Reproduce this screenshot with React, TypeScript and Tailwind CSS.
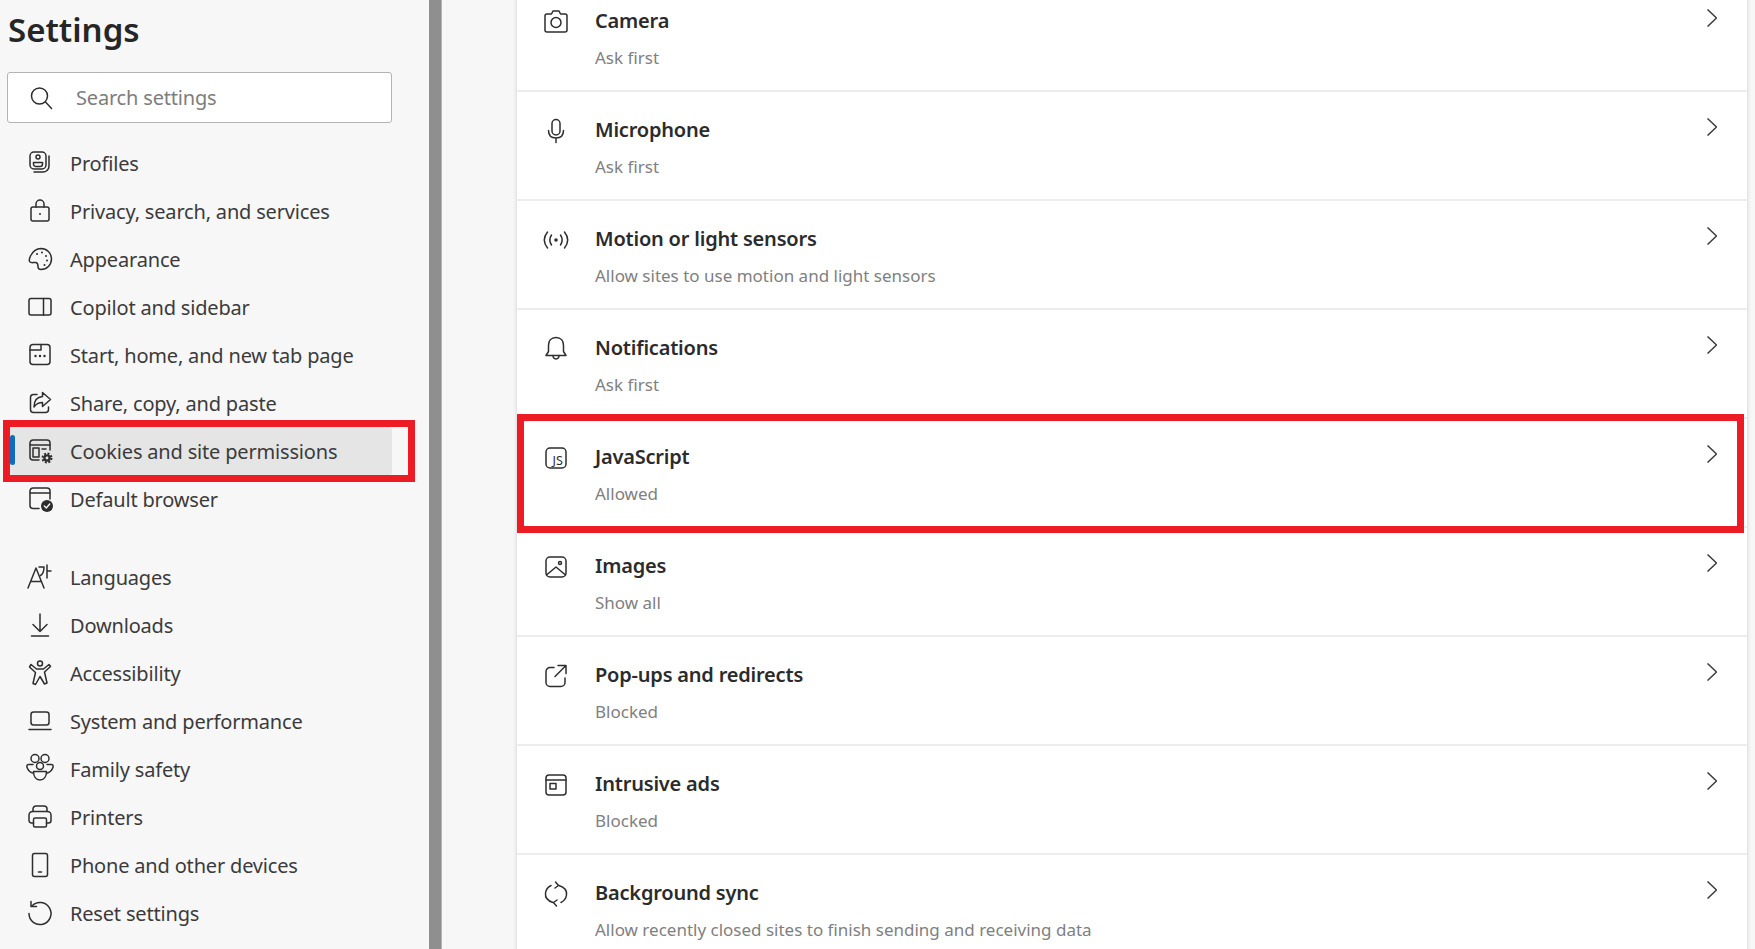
import type { ReactNode } from "react";

const Svg = ({ children, className = "w-6 h-6" }: { children: ReactNode; className?: string }) => (
  <svg
    viewBox="0 0 24 24"
    fill="none"
    stroke="#2e2e2e"
    strokeWidth="1.5"
    strokeLinecap="round"
    strokeLinejoin="round"
    className={`${className} shrink-0 overflow-visible`}
  >
    {children}
  </svg>
);

const sidebarTop = [
  {
    label: "Profiles",
    icon: (
      <>
        <rect x="2" y="1" width="16" height="17" rx="4" />
        <circle cx="10" cy="6" r="2" />
        <path d="M5.500 11.500h9v1.500a2.500 2.500 0 0 1-2.500 2.500H8A2.500 2.500 0 0 1 5.500 13z" />
        <path d="M21 5v10a6 6 0 0 1-6 6H6" />
      </>
    ),
  },
  {
    label: "Privacy, search, and services",
    icon: (
      <>
        <rect x="3" y="8" width="18" height="14" rx="2" />
        <path d="M8 8V5a4 4 0 0 1 8 0v3" />
        <circle cx="12" cy="15" r="1" fill="#2e2e2e" stroke="none" />
      </>
    ),
  },
  {
    label: "Appearance",
    icon: (
      <>
        <path d="M13 1.500a10.500 10.500 0 0 1 0 21c-2 0-3-1.200-3-3 0-2 0-3.500-2-4-2.500-.5-4 1-6-.5-1.500-1.500-.5-4 .5-6 2-4 6-7.500 10.500-7.500z" />
        <g fill="#2e2e2e" stroke="none">
          <circle cx="9" cy="7" r="1" />
          <circle cx="14" cy="5.500" r="1" />
          <circle cx="18" cy="9" r="1" />
          <circle cx="19" cy="13.500" r="1" />
          <circle cx="16.500" cy="18" r="1" />
        </g>
      </>
    ),
  },
  {
    label: "Copilot and sidebar",
    icon: (
      <>
        <rect x="1" y="3.500" width="22" height="16.500" rx="2" />
        <path d="M15.500 3.500V20" />
      </>
    ),
  },
  {
    label: "Start, home, and new tab page",
    icon: (
      <>
        <rect x="2" y="1.500" width="20" height="20" rx="3" />
        <path d="M2 7h11V1.500" />
        <path d="M7.500 13h.01M12 13h.01M16.500 13h.01" strokeWidth="2.400" />
      </>
    ),
  },
  {
    label: "Share, copy, and paste",
    icon: (
      <>
        <path d="M9 3.500H5.500a3 3 0 0 0-3 3v12a3 3 0 0 0 3 3h12a3 3 0 0 0 3-3V16" />
        <path d="M14.500 1.500l8 7-8 7v-4c-4.500 0-6.500 1.500-8.500 4.500 0-6 3-10 8.500-10.500z" />
      </>
    ),
  },
  {
    label: "Cookies and site permissions",
    icon: (
      <>
        <path d="M11 21H5a3 3 0 0 1-3-3V4a3 3 0 0 1 3-3h14a3 3 0 0 1 3 3v7" />
        <path d="M2 6h20" />
        <rect x="5" y="9" width="6" height="9" />
        <path d="M14 10h4" />
        <circle cx="19" cy="19" r="2.600" strokeWidth="2.400" />
        <circle cx="19" cy="19" r="4.500" strokeWidth="2" strokeDasharray="2 1.530" strokeLinecap="butt" />
      </>
    ),
  },
  {
    label: "Default browser",
    icon: (
      <>
        <path d="M11 21.500H5a3 3 0 0 1-3-3V4a3 3 0 0 1 3-3h14a3 3 0 0 1 3 3v8" />
        <path d="M2 6h20" />
        <circle cx="19" cy="19" r="6" fill="#2e2e2e" stroke="none" />
        <path d="M16.300 19l2 2 3.400-4" stroke="#f7f7f7" strokeWidth="1.400" />
      </>
    ),
  },
];

const sidebarBottom = [
  {
    label: "Languages",
    icon: (
      <>
        <path d="M0 23L8 3l8 20M3 16.500h10" />
        <path d="M11 2h5c0 4-1 7-3.500 8.500M19 0v13M19 6h4" />
      </>
    ),
  },
  {
    label: "Downloads",
    icon: (
      <>
        <path d="M12 1v17M5 11.500l7 7 7-7" />
        <path d="M3.500 23h17" />
      </>
    ),
  },
  {
    label: "Accessibility",
    icon: (
      <>
        <circle cx="12" cy="2.500" r="2.500" />
        <path d="M3 3.500l5.500 4.500h7L21 3.500l1.500 2-6 5.500 2.500 11-2.500 1L12 15.500 7.500 23.500 5 22.500l2.500-11-6-5.500z" />
      </>
    ),
  },
  {
    label: "System and performance",
    icon: (
      <>
        <rect x="3" y="3" width="18" height="13" rx="2.500" />
        <path d="M1 20.500h22" />
      </>
    ),
  },
  {
    label: "Family safety",
    icon: (
      <>
        <circle cx="7" cy="1.500" r="4" />
        <circle cx="17" cy="1.500" r="4" />
        <circle cx="12" cy="9" r="3.500" />
        <path d="M5.500 14.500h13c0 5-2.500 8.500-6.500 8.500s-6.500-3.500-6.500-8.500z" />
        <path d="M5 7.500H.5c-2 0-2 2-1 4 1 2 2.500 4 5 4.500M19 7.500h4.500c2 0 2 2 1 4-1 2-2.500 4-5 4.500" />
      </>
    ),
  },
  {
    label: "Printers",
    icon: (
      <>
        <path d="M5 6.500V4a3 3 0 0 1 3-3h8a3 3 0 0 1 3 3v2.500" />
        <path d="M5.500 18H3.500A2.500 2.500 0 0 1 1 15.500V10a3.500 3.500 0 0 1 3.500-3.500h15A3.500 3.500 0 0 1 23 10v5.500a2.500 2.500 0 0 1-2.500 2.500h-2" />
        <rect x="5.500" y="13" width="13" height="9" rx="1.500" />
      </>
    ),
  },
  {
    label: "Phone and other devices",
    icon: (
      <>
        <rect x="4.500" y="0.500" width="15" height="23" rx="2" />
        <path d="M10.500 19h3" />
      </>
    ),
  },
  {
    label: "Reset settings",
    icon: (
      <>
        <path d="M4 5a11 11 0 1 1-3 7.500" />
        <path d="M3 0.500V5.500h5.500" />
      </>
    ),
  },
];

const rows = [
  {
    title: "Camera",
    sub: "Ask first",
    icon: (
      <>
        <path d="M7.500 4l1.500-3h6l1.500 3H21a2 2 0 0 1 2 2v14a2 2 0 0 1-2 2H3a2 2 0 0 1-2-2V6a2 2 0 0 1 2-2z" />
        <circle cx="12" cy="12.500" r="5" />
      </>
    ),
  },
  {
    title: "Microphone",
    sub: "Ask first",
    icon: (
      <>
        <rect x="8" y="0.500" width="8" height="15.500" rx="4" />
        <path d="M4.500 11.500c0 5 3 7.500 7.500 7.500s7.500-2.500 7.500-7.500M12 19v4.500" />
      </>
    ),
  },
  {
    title: "Motion or light sensors",
    sub: "Allow sites to use motion and light sensors",
    icon: (
      <>
        <circle cx="12" cy="12" r="1.800" fill="#2e2e2e" stroke="none" />
        <path d="M3.500 4C-.5 9-.5 15 3.500 20M7.500 7C5.500 10 5.500 14 7.500 17M20.500 4C24.500 9 24.500 15 20.500 20M16.500 7C18.500 10 18.500 14 16.500 17" />
      </>
    ),
  },
  {
    title: "Notifications",
    sub: "Ask first",
    icon: (
      <>
        <path d="M12 .5c-5 0-7.500 3.500-7.500 8v6L2 18.500h20l-2.500-4v-6c0-4.500-2.500-8-7.500-8z" />
        <path d="M9 18.500c0 4.500 6 4.500 6 0" />
      </>
    ),
  },
  {
    title: "JavaScript",
    sub: "Allowed",
    marked: true,
    icon: (
      <>
        <rect x="2" y="2" width="20" height="20" rx="4" />
        <text
          x="8.500"
          y="19"
          fontFamily="'Noto Sans', sans-serif"
          fontSize="12.500"
          fill="#2e2e2e"
          stroke="none"
        >
          JS
        </text>
      </>
    ),
  },
  {
    title: "Images",
    sub: "Show all",
    icon: (
      <>
        <rect x="2" y="2" width="20" height="20" rx="4" />
        <circle cx="16" cy="8" r="1.500" />
        <path d="M2.500 20l9.500-8 9.500 8" />
      </>
    ),
  },
  {
    title: "Pop-ups and redirects",
    sub: "Blocked",
    icon: (
      <>
        <path d="M10 3.500H6a4 4 0 0 0-4 4v11a4 4 0 0 0 4 4h11a4 4 0 0 0 4-4V14" />
        <path d="M14 1.500h8v8M22 1.500L11 12.500" />
      </>
    ),
  },
  {
    title: "Intrusive ads",
    sub: "Blocked",
    icon: (
      <>
        <rect x="2" y="2" width="20" height="20" rx="3" />
        <path d="M2 7h20" />
        <rect x="6" y="10.500" width="6" height="5.500" />
      </>
    ),
  },
  {
    title: "Background sync",
    sub: "Allow recently closed sites to finish sending and receiving data",
    icon: (
      <>
        <path d="M15 3.500c5 1.500 8 5 7.500 9.500-.5 3.500-2.500 6-5.500 7.500" />
        <path d="M9 20.500c-5-1.500-8-5-7.500-9.500.5-3.500 2.500-6 5.500-7.500" />
        <path d="M11.500 0L14.500 3.500 11 6M12.500 24L9.500 20.500 13 18" />
      </>
    ),
  },
];

type NavItem = { label: string; icon: ReactNode };

const SideLink = ({ item, active }: { item: NavItem; active?: boolean }) => (
  <div className="relative flex h-12 items-center">
    {active && (
      <>
        <div className="absolute top-0 bottom-0 left-[10px] right-[37px] rounded-[3px] bg-[#e5e5e5]" />
        <div className="absolute left-[10px] top-[8px] h-[30px] w-[5px] rounded-sm bg-[#0f6cbd]" />
        <div className="absolute -top-[7px] -bottom-[7px] left-[3px] right-[14px] border-[7px] border-[#ed1c24]" />
      </>
    )}
    <div className="relative flex items-center gap-[18px] pl-[28px]">
      <Svg>{item.icon}</Svg>
      <span className="pt-[2px] text-[20px] tracking-[-0.18px] text-[#3b3b3b]">{item.label}</span>
    </div>
  </div>
);

export default function App() {
  return (
    <div className="flex h-screen overflow-hidden bg-[#f7f7f7] font-['Noto_Sans',sans-serif]">
      <aside className="w-[429px] shrink-0">
        <h1 className="pl-[8px] pt-[7px] text-[33px] leading-[46px] font-semibold text-[#262626]">
          Settings
        </h1>
        <div className="ml-[7px] mt-[19px] flex h-[51px] w-[385px] items-center gap-[22px] rounded-[3px] border border-[#b3b3b3] bg-white pl-[22px]">
          <Svg>
            <circle cx="9.500" cy="10" r="8" />
            <path d="M15.500 16l6 6.500" />
          </Svg>
          <span className="text-[20px] tracking-[-0.18px] text-[#7d7d7d]">Search settings</span>
        </div>
        <nav className="mt-[16px]">
          {sidebarTop.map((item) => (
            <SideLink key={item.label} item={item} active={item.label === "Cookies and site permissions"} />
          ))}
          <div className="h-[30px]" />
          {sidebarBottom.map((item) => (
            <SideLink key={item.label} item={item} />
          ))}
        </nav>
      </aside>
      <div className="w-[13px] shrink-0 border-r border-[#b5b5b5] bg-[#8f8f8f]" />
      <main className="flex-1 pl-[75px] pr-2">
        <div className="-mt-[17px] bg-white shadow-[0_0_4px_rgba(0,0,0,0.18)]">
          {rows.map((row) => (
            <div key={row.title} className="relative flex h-[109px] border-b-2 border-[#ededed]">
              {row.marked && (
                <div className="absolute -top-[5px] -bottom-[7px] left-0 right-[3px] border-[7px] border-[#ed1c24]" />
              )}
              <div className="ml-[27px] mt-[27px]">
                <Svg>{row.icon}</Svg>
              </div>
              <div className="ml-[27px] flex-1 pt-[24px]">
                <div className="text-[20px] leading-[28px] font-semibold tracking-[-0.2px] text-[#2b2b2b]">{row.title}</div>
                <div className="mt-[11px] text-[17px] leading-[24px] text-[#808080]">{row.sub}</div>
              </div>
              <svg
                viewBox="0 0 10 18"
                fill="none"
                stroke="#3b3b3b"
                strokeWidth="1.500"
                className="mr-[30px] mt-[26px] h-[18px] w-[10px]"
              >
                <path d="M0.500 0.500L9.500 9L0.500 17.500" />
              </svg>
            </div>
          ))}
        </div>
      </main>
    </div>
  );
}
